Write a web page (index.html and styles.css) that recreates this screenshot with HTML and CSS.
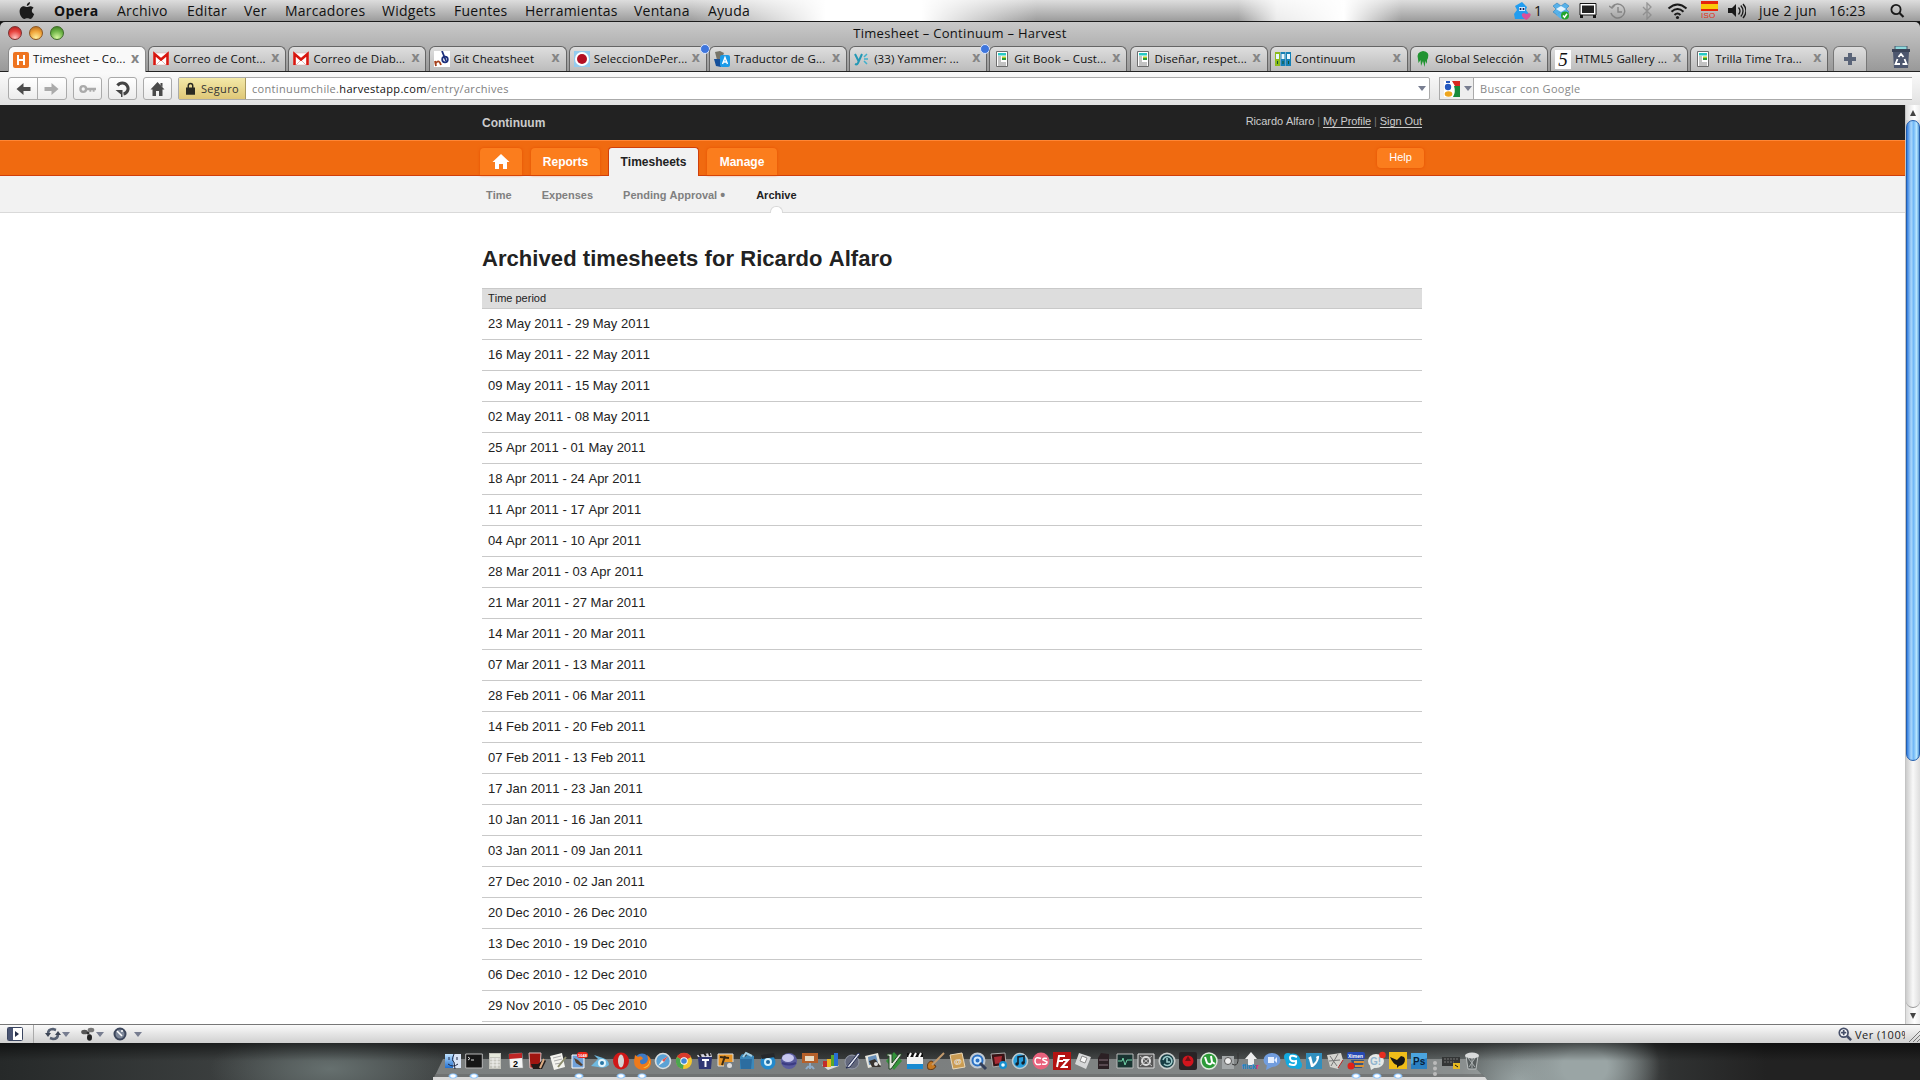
FILE: index.html
```html
<!DOCTYPE html>
<html lang="es">
<head>
<meta charset="utf-8">
<title>Timesheet – Continuum – Harvest</title>
<link rel="stylesheet" href="styles.css">
</head>
<body>
<svg class="defs" aria-hidden="true">
  <defs>
    <linearGradient id="gBlue" x1="0" y1="0" x2="0" y2="1"><stop offset="0" stop-color="#bfe2ff"/><stop offset="1" stop-color="#1f6fd0"/></linearGradient>
  </defs>
  <symbol id="gmail" viewBox="0 0 16 16"><path d="M0 2h16v12H0z" fill="#fff" stroke="#d8a0a0" stroke-width=".5"/><path d="M3 14l5-5 5 5" fill="none" stroke="#e3b5b2"/><path d="M1.500 14V3L8 8.500 14.500 3v11" fill="none" stroke="#d8160f" stroke-width="2.600"/></symbol>
  <symbol id="page" viewBox="0 0 16 16"><path d="M2.500.5h11v15h-11z" fill="#fff" stroke="#6d6d6d"/><path d="M4 2h8v2.500H4z" fill="#28c9c4"/><path d="M8 5.500h4V7H8z" fill="#b6c92c"/><path d="M8 7h4v2H8z" fill="#2a9c38"/><path d="M4 5.500h3v1H4zm0 2h3v1H4zm0 2h3v1H4zm0 2h8v1H4zm0 2h8v1H4z" fill="#888"/></symbol>
</svg>

<header class="menubar">
  <svg class="apple" viewBox="0 0 16 18"><path d="M11 0c.2 2-1.400 3.900-3.200 4C7.600 2 9.400.3 11 0zM8 5c.8 0 2-.9 3.600-.8 1.300.1 2.300.6 3 1.600-2.600 1.700-2.200 5.200.6 6.300-.7 2-2.200 4.900-3.900 4.900-1.200 0-1.600-.7-3-.7s-1.900.7-3 .7C3.200 17 .6 13 .6 9.500.6 6 2.800 4.200 4.900 4.200 6.300 4.200 7.200 5 8 5z" fill="#1c1c1c"/></svg>
  <nav class="menu"><b>Opera</b><span>Archivo</span><span>Editar</span><span>Ver</span><span>Marcadores</span><span>Widgets</span><span>Fuentes</span><span>Herramientas</span><span>Ventana</span><span>Ayuda</span></nav>
  <div class="tray">
    <svg viewBox="0 0 18 18"><path d="M9 0l5 5-1 3 3 4-3 5H2l-1-5 3-4-2-4z" fill="#229df0"/><path d="M6 5h6v4H6z" fill="#cfe9ff"/><circle cx="7.500" cy="7" r="1" fill="#114"/><circle cx="10.500" cy="7" r="1" fill="#114"/><path d="M13.500 18C6 14 8.500 9.500 13.500 12c5-2.500 6 2 0 6z" fill="#d9509b"/></svg>
    <span class="count">1</span>
    <svg viewBox="0 0 18 18"><path d="M5 1l4 3 4-3 4 3-3 3 3 3-4 3-4-3-4 3-4-3 3-3-3-3z" fill="#57b1e9" stroke="#2c83bd" stroke-width=".6"/><path d="M9 4l5 3-5 3-5-3z" fill="#e4f4ff"/><path d="M4 13l5 4 4-3-4-4z" fill="#57b1e9"/><circle cx="13" cy="13.500" r="4" fill="#23a52d"/><path d="M11 13.500l1.500 1.700 2.500-3.500" fill="none" stroke="#fff" stroke-width="1.500"/></svg>
    <svg viewBox="0 0 18 18"><path d="M1 1.500h16V13H1z" fill="#fff" stroke="#151515"/><path d="M3 3.500h12v7.500H3z" fill="#222"/><path d="M1 13h3v3H1zm13 0h3v3h-3z" fill="#151515"/></svg>
    <svg viewBox="0 0 18 18" class="dim"><path d="M3 5a7 7 0 1 1-1 6M0 4l3 2 3-3M9 5v5h4" fill="none" stroke="#777" stroke-width="1.400"/></svg>
    <svg viewBox="0 0 18 18" class="dim"><path d="M5 5l8 8-4 4V1l4 4-8 8" fill="none" stroke="#888" stroke-width="1.300"/></svg>
    <svg class="wifi" viewBox="0 0 20 18"><path d="M1 6.500q9-8 18 0M4 9.800q6-5.500 12 0M7 13q3-3 6 0" fill="none" stroke="#1a1a1a" stroke-width="2"/><circle cx="10" cy="15.500" r="1.600" fill="#1a1a1a"/></svg>
    <span class="flag"><i></i><small>ISO</small></span>
    <svg viewBox="0 0 18 18"><path d="M0 6h4l4-4v13l-4-4H0z" fill="#1a1a1a"/><path d="M10.500 5.500q3 3.500 0 7M12.800 3.500q4.500 5.500 0 11M15 2q6 7 0 14" fill="none" stroke="#1a1a1a" stroke-width="1.300"/></svg>
    <time class="date">jue 2 jun</time><time class="clock">16:23</time>
    <svg viewBox="0 0 16 18"><circle cx="7" cy="7.500" r="4.600" fill="none" stroke="#1a1a1a" stroke-width="1.800"/><path d="M10.500 11l4 4" stroke="#1a1a1a" stroke-width="2.200"/></svg>
  </div>
</header>

<main class="window">
  <div class="titlebar"><div class="lights"><i class="red"></i><i class="yellow"></i><i class="green"></i></div><span>Timesheet – Continuum – Harvest</span></div>

  <div class="tabstrip">
    <div class="tabs">
      <div class="tab active"><svg viewBox="0 0 16 16"><rect width="16" height="16" rx="2" fill="#ee7420"/><path d="M5 3v10M11 3v10M5 8h6" stroke="#fff" stroke-width="2"/></svg><span>Timesheet – Co...</span><b>x</b></div>
      <div class="tab"><svg><use href="#gmail"/></svg><span>Correo de Cont...</span><b>x</b></div>
      <div class="tab"><svg><use href="#gmail"/></svg><span>Correo de Diab...</span><b>x</b></div>
      <div class="tab"><svg viewBox="0 0 16 16"><path d="M0 0h16v16H0z" fill="#fff"/><path d="M2 15l-1-5M2 12q3-4 5 2" fill="none" stroke="#a5401c" stroke-width="1.800"/><path d="M8 0l4 10" stroke="#1c2f7c" stroke-width="1.800"/><circle cx="11" cy="8.500" r="2.800" fill="none" stroke="#1c2f7c" stroke-width="1.800"/></svg><span>Git Cheatsheet</span><b>x</b></div>
      <div class="tab unread"><svg viewBox="0 0 16 16"><path d="M0 0h16v16H0z" fill="#94cbee"/><circle cx="8" cy="8" r="7" fill="#fff"/><circle cx="8" cy="8" r="5" fill="#b30f24"/></svg><span>SeleccionDePer...</span><b>x</b></div>
      <div class="tab"><svg viewBox="0 0 16 16"><path d="M1 1l5-1 4 2-2 5-5 2z" fill="#77756a"/><path d="M0 8h7v8l-5-1z" fill="#154f9a"/><rect x="6" y="4" width="10" height="12" rx="2" fill="#1b9be8"/><path d="M8.500 13L11 6.500l2.500 6.500M9.500 11h3" fill="none" stroke="#fff" stroke-width="1.400"/></svg><span>Traductor de G...</span><b>x</b></div>
      <div class="tab unread"><svg viewBox="0 0 16 16"><path d="M1 3l3.500 7M8 3L4 12q-1 2-3 1" fill="none" stroke="#2498b5" stroke-width="2"/><path d="M10 6l3-3M10 8h4M10 10l3 3" stroke="#3fb0cc" stroke-width="1.500"/></svg><span>(33) Yammer: ...</span><b>x</b></div>
      <div class="tab"><svg><use href="#page"/></svg><span>Git Book – Cust...</span><b>x</b></div>
      <div class="tab"><svg><use href="#page"/></svg><span>Diseñar, respet...</span><b>x</b></div>
      <div class="tab"><svg viewBox="0 0 16 16"><path d="M0 1h5v14H0z" fill="#8dbb1c"/><path d="M5.500 1h5v14h-5zM11 1h5v14h-5z" fill="#1580b5"/><path d="M1 3h3v5H1zm5.500 0h3v5h-3zM12 3h3v5h-3z" fill="#e8f6ff"/><path d="M2 10h1v3H2zm5.500 0h1v3h-1zM13 10h1v3h-1z" fill="#153"/></svg><span>Continuum</span><b>x</b></div>
      <div class="tab"><svg viewBox="0 0 16 16"><path d="M3 8q-2-7 5-8 7 1 5 7l-1 2v4l-1.500-3-1 6-1.500-6-2 5-.5-6-2 3z" fill="#219331"/></svg><span>Global Selección</span><b>x</b></div>
      <div class="tab"><div class="five">5</div><span>HTML5 Gallery ...</span><b>x</b></div>
      <div class="tab"><svg><use href="#page"/></svg><span>Trilla Time Tra...</span><b>x</b></div>
    </div>
    <div class="newtab"><svg viewBox="0 0 14 14"><path d="M5 1h4v4h4v4H9v4H5V9H1V5h4z" fill="#5a6478"/></svg></div>
    <svg class="trash" viewBox="0 0 20 22"><path d="M4 0h12v4H4z" fill="#8fd9dc" stroke="#47566a"/><path d="M1 3h18v3H1z" fill="#3b4458"/><path d="M2 6h16l-1 16H3z" fill="#4c566e"/><path d="M7.500 11L10 8l2.500 3M13.500 13l2 5h-4M9 18H4.500l2-5" fill="none" stroke="#fff" stroke-width="1.800"/></svg>
  </div>

  <div class="toolbar">
    <div class="btn pair"><svg viewBox="0 0 16 16"><path d="M1 8l7-6v4h7v4H8v4z" fill="#4c4c4c"/></svg><svg viewBox="0 0 16 16"><path d="M15 8L8 2v4H1v4h7v4z" fill="#aaa"/></svg></div>
    <div class="btn"><svg viewBox="0 0 18 16"><circle cx="4.500" cy="8" r="3" fill="none" stroke="#aaa" stroke-width="2.500"/><path d="M7 6.800h11v2.500h-1.500V11h-2V9.300H13V11h-2V9.300H7z" fill="#aaa"/></svg></div>
    <div class="btn"><svg viewBox="0 0 16 16"><path d="M3 4.500A5.800 5.500 0 1 1 9 13" fill="none" stroke="#444" stroke-width="3"/><path d="M1 9h7v7H6.500v-2.500z" fill="#444"/></svg></div>
    <div class="btn"><svg viewBox="0 0 16 16"><path d="M8 1l7 7.500h-2V15H9.500v-5h-3v5H3V8.500H1zM11 2h2v4l-2-2z" fill="#4a4a4a"/></svg></div>
    <div class="address">
      <div class="secure"><svg viewBox="0 0 10 14"><path d="M2.500 7V4a2.500 2.500 0 0 1 5 0v3" fill="none" stroke="#2a2a22" stroke-width="1.600"/><path d="M0 6h10v8H0z" fill="#2a2a22"/></svg><span>Seguro</span></div>
      <span class="url">continuumchile.<em>harvestapp.com</em>/entry/archives</span><i class="caret"></i>
    </div>
    <div class="search">
      <div class="engine"><svg viewBox="0 0 16 16"><path d="M0 0h16v16H0z" fill="#fff"/><path d="M8 0h8v5h-5z" fill="#d7281f"/><path d="M10 5h6v11H9q3-5 1-11z" fill="#168b3c"/><circle cx="4" cy="6" r="3.200" fill="#2458be"/><path d="M2 0h4v2H2z" fill="#2458be"/><ellipse cx="4.500" cy="13" rx="3.800" ry="2.700" fill="#eda51d"/></svg><i class="caret"></i></div>
      <span>Buscar con Google</span>
    </div>
  </div>

  <div class="viewport">
    <div class="page">
      <div class="top"><div class="wrap"><strong>Continuum</strong><span class="user">Ricardo Alfaro <i>|</i> <u>My Profile</u> <i>|</i> <u>Sign Out</u></span></div></div>
      <div class="nav"><div class="wrap">
        <div class="navtabs"><a class="home"><svg viewBox="0 0 18 16"><path d="M9 0l8.500 8H15v7h-4v-5H7v5H3V8H.5z" fill="#fff"/></svg></a><a class="reports">Reports</a><a class="current">Timesheets</a><a class="manage">Manage</a></div>
        <a class="help">Help</a>
      </div></div>
      <div class="subnav"><div class="wrap"><a>Time</a><a>Expenses</a><a>Pending Approval <b>•</b></a><a class="on">Archive</a></div></div>
      <section class="content">
        <h1>Archived timesheets for Ricardo Alfaro</h1>
        <div class="thead">Time period</div>
        <ul class="rows">
          <li>23 May 2011 - 29 May 2011</li>
          <li>16 May 2011 - 22 May 2011</li>
          <li>09 May 2011 - 15 May 2011</li>
          <li>02 May 2011 - 08 May 2011</li>
          <li>25 Apr 2011 - 01 May 2011</li>
          <li>18 Apr 2011 - 24 Apr 2011</li>
          <li>11 Apr 2011 - 17 Apr 2011</li>
          <li>04 Apr 2011 - 10 Apr 2011</li>
          <li>28 Mar 2011 - 03 Apr 2011</li>
          <li>21 Mar 2011 - 27 Mar 2011</li>
          <li>14 Mar 2011 - 20 Mar 2011</li>
          <li>07 Mar 2011 - 13 Mar 2011</li>
          <li>28 Feb 2011 - 06 Mar 2011</li>
          <li>14 Feb 2011 - 20 Feb 2011</li>
          <li>07 Feb 2011 - 13 Feb 2011</li>
          <li>17 Jan 2011 - 23 Jan 2011</li>
          <li>10 Jan 2011 - 16 Jan 2011</li>
          <li>03 Jan 2011 - 09 Jan 2011</li>
          <li>27 Dec 2010 - 02 Jan 2011</li>
          <li>20 Dec 2010 - 26 Dec 2010</li>
          <li>13 Dec 2010 - 19 Dec 2010</li>
          <li>06 Dec 2010 - 12 Dec 2010</li>
          <li>29 Nov 2010 - 05 Dec 2010</li>
        </ul>
      </section>
    </div>
    <div class="scrollbar"><i class="up"></i><div class="track"><div class="thumb"></div></div><i class="down"></i></div>
  </div>

  <footer class="status">
    <div class="panel"><svg viewBox="0 0 16 14"><rect x=".5" y=".5" width="15" height="13" rx="1" fill="#fff" stroke="#3a4560"/><path d="M1 1h5v12H1z" fill="#4a5573"/><path d="M8 4l4 3-4 3z" fill="#27304a"/></svg></div>
    <svg class="s1" viewBox="0 0 16 14"><path d="M3 7q0-5 5-5l3 1M13 7q0 5-5 5l-3-1" fill="none" stroke="#566072" stroke-width="2.600"/><path d="M0 6h6L3 10zM10 8h6l-3-4z" fill="#3d4656"/></svg><i class="caret"></i>
    <svg class="s2" viewBox="0 0 14 14"><ellipse cx="3.500" cy="5" rx="3.300" ry="2.300" fill="#555"/><ellipse cx="10" cy="3" rx="3.300" ry="2.300" fill="#777"/><ellipse cx="8.500" cy="10.500" rx="2.500" ry="3.300" fill="#222"/><circle cx="7" cy="6" r="1.500" fill="#333"/></svg><i class="caret"></i>
    <svg class="s3" viewBox="0 0 14 14"><circle cx="7" cy="7" r="5.500" fill="#7d8799" stroke="#3d475c" stroke-width="2"/><path d="M4 4l5 5" stroke="#fff" stroke-width="1.600"/><circle cx="9" cy="4" r="1" fill="#fff"/></svg><i class="caret last"></i>
    <div class="zoomlevel"><svg viewBox="0 0 16 16"><circle cx="6.500" cy="6.500" r="5" fill="#fff" stroke="#47506a" stroke-width="2"/><path d="M10 10l5 5" stroke="#47506a" stroke-width="3"/><path d="M3.500 6.500h6M6.500 3.500v6" stroke="#47506a" stroke-width="2"/></svg><span>Ver (100%)</span></div>
    <svg class="grip" viewBox="0 0 12 12"><path d="M1 12L12 1M5 12l7-7M9 12l3-3" stroke="#777"/></svg>
  </footer>
</main>

<div class="desktop">
  <div class="dock">
    <svg class="shelf" viewBox="0 0 1054 21" preserveAspectRatio="none"><path d="M10 0h1024l20 21H0z" fill="#a9acac" fill-opacity=".58"/><path d="M2 15h1047l3 3H1z" fill="#686969" fill-opacity=".6"/><path d="M0 18h1052l2 3H0z" fill="#d9d9d9"/></svg>
    <div class="icons">
      <svg class="run" viewBox="0 0 18 18"><path d="M1 2h16v14H1z" fill="url(#gBlue)"/><path d="M10 2h7v14H9z" fill="#d9e4f5"/><path d="M10 2q-3 7 0 8l1 7M4 12q5 4 10 0M5 5v3M13 5v3" fill="none" stroke="#1c2744"/></svg>
      <svg class="run" viewBox="0 0 18 18"><path d="M.7 2h16.600v14H.7z" fill="#161616" stroke="#b8b8b8"/><path d="M3 5l2 1.500L3 8M6 8h3" fill="none" stroke="#ddd"/></svg>
      <svg viewBox="0 0 18 18"><path d="M3 1h12v16H3z" fill="#c5c5bd"/><path d="M4 2h10v3H4z" fill="#e6e9dc"/><path d="M4 7h10M4 10h10M4 13h10M7 6v10M11 6v10" stroke="#f1f1ee"/></svg>
      <svg viewBox="0 0 18 18"><path d="M2 2l13-1 1 15H3z" fill="#f5f5f5" stroke="#999" stroke-width=".5"/><path d="M2 2l13-1v5L2 7z" fill="#be2525"/><text x="6" y="15" class="cal">2</text></svg>
      <svg viewBox="0 0 18 18"><path d="M1 1h12l-1 15H2z" fill="#a01510" stroke="#dbb"/><path d="M3 12h7l6-5 2 2-4 8H5z" fill="#201a18"/><path d="M12 16l4-9" stroke="#dcab83" stroke-width="2"/></svg>
      <svg viewBox="0 0 18 18"><path d="M1 4l12-3 3 14-11 3z" fill="#f3f3ee"/><path d="M4 6l8-2M5 9l8-2M6 12l6-1" stroke="#aaa"/><path d="M9 15l8-10" stroke="#8b8b6b" stroke-width="2"/></svg>
      <svg class="run" viewBox="0 0 18 18"><path d="M2 3h12v13H2z" fill="#6fa0d8" stroke="#fff"/><path d="M4 6l4 2 5 5-2 1-5-3z" fill="#57412f"/><rect x="7" y="0" width="11" height="6" rx="3" fill="#eb2519"/><text x="8" y="4.800" class="badge">1048</text></svg>
      <svg viewBox="0 0 18 18"><path d="M0 14l7-7-4-4 9 3q6 2 6 7-4 4-11 2z" fill="#6fb9df"/><circle cx="11" cy="11" r="4" fill="#e4f4fa"/><circle cx="11" cy="11" r="2" fill="#2875a4"/></svg>
      <svg class="run" viewBox="0 0 18 18"><ellipse cx="9" cy="9" rx="8" ry="8.500" fill="#cf1717"/><ellipse cx="9" cy="9" rx="3" ry="6.500" fill="#d4d4d4"/></svg>
      <svg class="run" viewBox="0 0 18 18"><circle cx="9" cy="9" r="7.500" fill="#3f7ac4"/><path d="M2 3l3 2q4-2 5 2-5 1-2 5 6 1 7-5l-1-4q5 3 4 9-2 6-9 6-8-1-8-9z" fill="#ef7a1a"/><path d="M15 5q4 8-5 11 6 0 7-6z" fill="#f6c83d"/></svg>
      <svg viewBox="0 0 18 18"><circle cx="9" cy="9" r="7.500" fill="#5ba2d5" stroke="#d7dde0" stroke-width="1.600"/><path d="M14 4l-4 6-6 4 4-6z" fill="#f1eeee"/><path d="M14 4l-4 6-2-2z" fill="#d55"/></svg>
      <svg viewBox="0 0 18 18"><circle cx="9" cy="9" r="8" fill="#f2c62d"/><path d="M9 9L2 5a8 8 0 0 1 14 0z" fill="#d93a2c"/><path d="M9 9l-1 8A8 8 0 0 1 2 5z" fill="#4ba64f"/><circle cx="9" cy="9" r="3.700" fill="#fff"/><circle cx="9" cy="9" r="2.800" fill="#4386d5"/></svg>
      <svg viewBox="0 0 18 18"><path d="M2 5h14l-1 12H3z" fill="#303773"/><path d="M1 3l14-2 1 4H2z" fill="#d7d7e1"/><path d="M3 2l2 3M8 1l2 3M13 1l1 3" stroke="#222" stroke-width="2"/><path d="M6 8h7M9.500 8v7" stroke="#fff" stroke-width="2"/></svg>
      <svg viewBox="0 0 18 18"><path d="M1 2h15v12H1z" fill="#e69425" stroke="#ddd"/><path d="M5 13l3-9M3 5l9 1" stroke="#3c2a13" stroke-width="2"/><rect x="7" y="10" width="11" height="7" rx="1" fill="#777e83"/><circle cx="12.500" cy="13.500" r="2.500" fill="#ddd"/></svg>
      <svg viewBox="0 0 18 18"><path d="M2 5q3-6 5 0 4-5 6-2l3 1v13H2z" fill="#3c88ba"/><path d="M2 7h12l-1 10H3z" fill="#2c6da0"/><path d="M5 5l3-4 6 3" stroke="#a2cfe5" stroke-width="2" fill="none"/></svg>
      <svg viewBox="0 0 18 18"><circle cx="9" cy="10" r="7.500" fill="#2489cc"/><path d="M2 3l13-2 1 4-13 2z" fill="#26282b"/><circle cx="9" cy="10" r="4" fill="#d3f1fc"/><circle cx="9" cy="10" r="2" fill="#206aa2"/></svg>
      <svg viewBox="0 0 18 18"><circle cx="9" cy="9" r="8" fill="#5a5c9e"/><ellipse cx="8" cy="6" rx="6" ry="4" fill="#c7c7ee"/><path d="M2 11q7 3 14 0" stroke="#3c3c83" stroke-width="2" fill="none"/></svg>
      <svg viewBox="0 0 18 18"><path d="M1 1h16v10H1z" fill="#b5602a"/><path d="M4 4h9v5H4z" fill="#e6dbc6"/><path d="M9 11v6M5 17q4-6 8 0" stroke="#8dabc9" stroke-width="2" fill="none"/></svg>
      <svg viewBox="0 0 18 18"><path d="M0 13l11-4 6 5-11 4z" fill="#ddd"/><path d="M1 9h4v6H1z" fill="#c22c29"/><path d="M5 7h4v8H5z" fill="#edb723"/><path d="M9 3h3v11H9z" fill="#58a82c"/><path d="M12 1h4v13h-4z" fill="#296fd1"/></svg>
      <svg viewBox="0 0 18 18"><circle cx="9" cy="10" r="7" fill="#63687b" stroke="#9499a8"/><path d="M3 16L15 1l2 1-10 13z" fill="#dfe2ed" stroke="#222b52"/></svg>
      <svg viewBox="0 0 18 18"><path d="M1 4l13-3 3 12-13 3z" fill="#e5e4dc"/><path d="M4 5l8-2 2 8-9 2z" fill="#6991bb"/><path d="M5 9l6-2 6 8H8z" fill="#37332f"/><circle cx="12" cy="12" r="2" fill="#ddd"/></svg>
      <svg viewBox="0 0 18 18"><path d="M9 0l8 9-8 9-8-9z" fill="#329339"/><path d="M2 2h5v9l7-9h3L6 17H4V4H2z" fill="#e1e5dd" stroke="#244427"/></svg>
      <svg viewBox="0 0 18 18"><path d="M1 5h16v7H1z" fill="#f2f2f2"/><path d="M1 1h16v4H1z" fill="#111"/><path d="M3 5l2-4M8 5l2-4M13 5l2-4" stroke="#fff" stroke-width="2"/><path d="M1 12h16v5H1z" fill="#188ad1"/></svg>
      <svg viewBox="0 0 18 18"><path d="M1 17q-2-6 3-8 3 0 3 4l2 1q-2 5-8 3z" fill="#c87920" stroke="#633915"/><path d="M5 13L17 1" stroke="#c29a6d" stroke-width="2"/></svg>
      <svg viewBox="0 0 18 18"><path d="M2 3l12-2 3 14-12 2z" fill="#ca9c54" stroke="#ecdab9"/><text x="6" y="12" class="at">@</text></svg>
      <svg viewBox="0 0 18 18"><circle cx="8.500" cy="8.500" r="7" fill="#2a70c3" stroke="#c0cad4" stroke-width="2"/><circle cx="8.500" cy="8.500" r="3" fill="none" stroke="#cee9ff" stroke-width="2"/><path d="M11 11l6 6" stroke="#333f59" stroke-width="3"/></svg>
      <svg viewBox="0 0 18 18"><path d="M1 2l14-1 1 12-13 2z" fill="#381315" stroke="#aaa"/><path d="M4 5l8-1-1 7-6 1z" fill="#aa2c35"/><circle cx="13" cy="13" r="4" fill="#158fd0"/><circle cx="13" cy="13" r="1.800" fill="#e8faff"/></svg>
      <svg viewBox="0 0 18 18"><circle cx="9" cy="9" r="7.500" fill="#279edc" stroke="#bdcbd0" stroke-width="1.500"/><path d="M7 12V5l6-1v7" fill="none" stroke="#15202a" stroke-width="1.600"/><circle cx="6" cy="12" r="1.700" fill="#15202a"/><circle cx="12" cy="11" r="1.700" fill="#15202a"/></svg>
      <svg viewBox="0 0 18 18"><circle cx="9" cy="9" r="8.500" fill="#e9627d"/><path d="M9 6.500Q3 4 3 9t6 3M15 6.500q-5-1-4 1.500l4 2q0 3-5 2" fill="none" stroke="#fff" stroke-width="1.500"/></svg>
      <svg viewBox="0 0 18 18"><path d="M0 0h18v18H0z" fill="#b31312"/><path d="M4 15L6 4h6M5 9h5M10 8h5l-6 7h6" fill="none" stroke="#fff" stroke-width="2"/></svg>
      <svg viewBox="0 0 18 18"><path d="M5 1l12 4-5 12L1 12z" fill="#d6d7d8"/><path d="M8 4l5 2-2 5-5-2z" fill="#f8f8f8" stroke="#888"/></svg>
      <svg viewBox="0 0 18 18"><path d="M6 1l8 1v15H3V6z" fill="#2b2024"/><path d="M4 8h9M4 13h9" stroke="#85707a"/></svg>
      <svg viewBox="0 0 18 18"><path d="M1 2h16v14H1z" fill="#193431" stroke="#bbb"/><path d="M2 9h4l1-3 2 7 2-5h5" fill="none" stroke="#70d1a6"/></svg>
      <svg viewBox="0 0 18 18"><path d="M1 2h16v14H1z" fill="#555" stroke="#ddd"/><circle cx="9" cy="9" r="4" fill="none" stroke="#ddd" stroke-width="2"/><path d="M3 4l12 10M15 4L3 14" stroke="#bbb"/></svg>
      <svg viewBox="0 0 18 18"><circle cx="9" cy="9" r="7.700" fill="#173e45" stroke="#c8cdcc" stroke-width="1.700"/><path d="M5 8a4.500 4.500 0 1 1 1 4M9 6v4h3" fill="none" stroke="#9dcac9" stroke-width="1.600"/></svg>
      <svg viewBox="0 0 18 18"><rect width="18" height="18" rx="2" fill="#292325"/><circle cx="9" cy="9" r="5.500" fill="#d1151d"/><path d="M9 4l3 5H6z" fill="#741015"/></svg>
      <svg viewBox="0 0 18 18"><circle cx="9" cy="9" r="8" fill="#2c9a37" stroke="#deebdc" stroke-width="1.500"/><path d="M5 5l2 6q4 3 5-1l-1-6M12 10l3 2" fill="none" stroke="#fff" stroke-width="2"/></svg>
      <svg viewBox="0 0 18 18"><path d="M1 4h12v13H1z" fill="#a4a8a9"/><circle cx="7" cy="9" r="3.500" fill="#eee" stroke="#555"/><path d="M11 12q5 3 6-3V1" stroke="#333" fill="none"/></svg>
      <svg viewBox="0 0 18 18"><path d="M9 0l6 7h-3v6H6V7H3z" fill="#ededed"/><text x="0" y="17" class="flickr">flick<tspan fill="#e61680">r</tspan></text></svg>
      <svg viewBox="0 0 18 18"><ellipse cx="9" cy="8" rx="8.500" ry="7" fill="#719dde"/><path d="M4 13l-1 5 6-3z" fill="#719dde"/><path d="M5 5h6v6H5zM11 8l3-3v6z" fill="#e5efff"/></svg>
      <svg viewBox="0 0 18 18"><circle cx="9" cy="9" r="7.500" fill="#13a9df"/><circle cx="4" cy="5" r="4" fill="#13a9df"/><circle cx="14" cy="13" r="4" fill="#13a9df"/><path d="M13 5Q6 2 6 6t6 3q1 6-7 3" fill="none" stroke="#fff" stroke-width="2"/></svg>
      <svg viewBox="0 0 18 18"><path d="M1 1h16v16H1z" fill="#318fbe"/><path d="M3 6l3-2 2 8q5-4 3-7 4-3 3 1-1 5-6 9H6L4 7z" fill="#fff"/></svg>
      <svg viewBox="0 0 18 18"><path d="M1 3l14-2 2 7-5 9-8-2z" fill="#d4d4cf"/><path d="M4 4l7 10M12 2L5 14M3 9l11-1" stroke="#777"/><path d="M12 16l5-8" stroke="#b02222"/></svg>
      <svg class="run" viewBox="0 0 18 18"><path d="M4 8h13l-2 8H6z" fill="#365681"/><path d="M7 10h10M8 14h9" stroke="#dc9134" stroke-width="2"/><rect width="18" height="7" rx="2" fill="#264ab4"/><text x="1" y="5.500" class="xim">Ximen</text><circle cx="4" cy="14" r="3.500" fill="#e02018"/></svg>
      <svg class="run" viewBox="0 0 18 18"><ellipse cx="8" cy="9" rx="8" ry="7" fill="#e5e9e7"/><path d="M2 14l1 4 5-3z" fill="#e5e9e7"/><text x="2" y="13" class="growl">G!</text><circle cx="14.500" cy="3" r="3.300" fill="#e62d21"/></svg>
      <svg class="run" viewBox="0 0 18 18"><path d="M0 0h18v17H0z" fill="#f0bd19"/><path d="M1 5l7 3 4-4 3 1 1 2q0 6-6 7l-2 2v-3Q4 12 1 5z" fill="#181818"/></svg>
      <svg viewBox="0 0 18 18"><path d="M1 1h16v16H1z" fill="#2b80c2"/><path d="M1 1h16v5L1 12z" fill="#4ba5e0"/><text x="3" y="13" class="ps">Ps</text></svg>
      <i class="sep"></i>
      <svg viewBox="0 0 18 18"><path d="M0 5h18v9H0z" fill="#343636"/><path d="M2 7h14M2 10h10" stroke="#777" stroke-dasharray="2 1"/><path d="M11 11h7v6h-7z" fill="#e6b922"/><path d="M13 13l3 2" stroke="#111"/></svg>
      <svg viewBox="0 0 18 18"><path d="M3 4h12l-2 13H5z" fill="#555b5c" stroke="#b9bebe"/><path d="M5 6l7 9M12 6l-6 9M9 5v11" stroke="#a9afaf"/><ellipse cx="9" cy="3.500" rx="7" ry="3" fill="#d8dada"/></svg>
    </div>
  </div>
</div>
</body>
</html>
```
FILE: styles.css
```css
* { box-sizing: border-box; }
html, body { margin: 0; height: 100%; overflow: hidden; }
body { display: flex; flex-direction: column; background: #111; color: #222; font-family: "Open Sans", "Noto Sans", sans-serif; }
svg { display: block; flex: none; }
.defs { position: absolute; width: 0; height: 0; }

.menubar { height: 22px; flex: none; display: flex; align-items: center; padding-left: 19px; border-bottom: 1px solid #1b1b1b; color: #111; font-size: 14px; line-height: 21px;
  background: linear-gradient(90deg, transparent 36%, #fff 43%, #fff 48%, transparent 54%, transparent 64.500%, #ffffffcc 66.500%, #fff 70%, transparent 73%), linear-gradient(#ddd, #9c9c9c); }
.apple { width: 16px; height: 18px; }
.menu { display: grid; grid-template-columns: 63px 70px 57px 41px 97px 72px 71px 109px 74px 50px; margin-left: 19px; letter-spacing: .25px; white-space: nowrap; }
.tray { display: grid; grid-template-columns: 18px 21px 27px 30px 29px 29px 34px 27px 31px 70px 59px 20px; align-items: center; margin-left: auto; width: 407px; white-space: nowrap; letter-spacing: .2px; }
.tray svg { width: 18px; height: 18px; }
.tray .wifi { width: 21px; height: 18px; }
.count { padding-left: 3px; }
.dim { opacity: .8; }
.flag { width: 17px; height: 19px; display: flex; flex-direction: column; }
.flag i { height: 10px; background: linear-gradient(#e5250d 3px, #f9c90b 3px 8px, #e5250d 8px); }
.flag small { font: 8px/9px "Liberation Sans", sans-serif; color: #e32b12; }

.window { height: 1021px; flex: none; display: flex; flex-direction: column; border-radius: 5px 5px 0 0; overflow: hidden; background: linear-gradient(#c9c9c9, #989898 50px); }
.titlebar { height: 24px; flex: none; position: relative; text-align: center; font-size: 13px; line-height: 23px; letter-spacing: .3px; color: #111; }
.lights { position: absolute; left: 8px; top: 4px; display: flex; gap: 7px; }
.lights i { width: 14px; height: 14px; border-radius: 50%; border: 1px solid #7a3030; background: radial-gradient(circle at 50% 90%, #ffc5c0, #e8433e 55%, #a31b1b); }
.lights .yellow { border-color: #8a5520; background: radial-gradient(circle at 50% 90%, #ffef9c, #f0a338 55%, #a7601a); }
.lights .green { border-color: #3d6a28; background: radial-gradient(circle at 50% 90%, #d8f8a0, #6fb548 55%, #37751d); }

.tabstrip { height: 26px; flex: none; display: flex; padding-left: 8px; border-bottom: 1px solid #222; }
.tabs { display: grid; grid-template-columns: repeat(13, 138px); column-gap: 2.200px; width: 1825px; }
.tab { position: relative; display: flex; align-items: center; height: 25px; padding-left: 4px; border: 1px solid #656565; border-bottom: 0; border-radius: 6px 6px 0 0; background: linear-gradient(#dedede, #bcbcbc); font-size: 11.500px; line-height: 14px; color: #111; }
.tab.active { height: 26px; background: #f9f9f9; border-color: #888; }
.tab svg { width: 16px; height: 16px; }
.tab span { width: 97px; margin-left: 4px; padding-bottom: 1px; white-space: nowrap; letter-spacing: .1px; }
.tab b { font: bold 14px/16px "Open Sans", sans-serif; color: #858585; margin: -4px 0 0 1px; }
.unread::after { content: ""; position: absolute; right: -4px; top: -3px; width: 8px; height: 8px; border-radius: 50%; background: #3f76dd; border: 1px solid #dfe8fb; }
.tab .five { width: 16px; height: 19px; background: #fff; font: italic 19px/19px "Liberation Serif", serif; text-align: center; }
.newtab { width: 34px; height: 25px; display: grid; place-items: center; border: 1px solid #777; border-bottom: 0; border-radius: 6px 6px 0 0; background: linear-gradient(#dedede, #bcbcbc); }
.newtab svg { width: 14px; height: 14px; }
.trash { width: 20px; height: 22px; margin-left: 24px; }

.toolbar { height: 33px; flex: none; display: flex; padding: 5px 8px 0; background: linear-gradient(#fafafa, #e2e2e2); }
.btn { width: 29px; height: 23px; margin-right: 6px; border: 1px solid #aaa; border-radius: 3px; background: linear-gradient(#fff, #ececec); display: flex; align-items: center; justify-content: space-around; }
.btn.pair { width: 59px; background: linear-gradient(90deg, transparent 28px, #aaa 28px 29px, transparent 29px), linear-gradient(#fff, #ececec); }
.btn svg { width: 17px; height: 16px; }
.address { width: 1252px; height: 23px; display: flex; align-items: center; border: 1px solid #aaa; border-radius: 2px; background: #fff; font-size: 11px; }
.secure { width: 67px; height: 21px; display: flex; align-items: center; padding-left: 7px; background: linear-gradient(#f3e9a8, #dfc777); border-right: 1px solid #a99a60; color: #333; letter-spacing: .3px; }
.secure svg { width: 9px; height: 13px; margin-right: 6px; }
.url { margin-left: 6px; color: #808080; letter-spacing: .33px; }
.url em { font-style: normal; color: #111; }
.caret { width: 0; height: 0; border: 4px solid transparent; border-top: 5px solid #777d90; border-bottom: 0; }
.address .caret { margin-left: auto; margin-right: 3px; }
.search { flex: none; width: 473px; height: 23px; margin-left: 9px; display: flex; align-items: center; border: 1px solid #aaa; border-right: 0; background: #fff; font-size: 11px; letter-spacing: .3px; color: #888; }
.engine { width: 34px; height: 21px; margin-right: 6px; display: flex; align-items: center; gap: 4px; padding-left: 4px; border-right: 1px solid #aaa; background: #eee; }
.engine svg { width: 16px; height: 16px; }

.viewport { height: 919px; flex: none; display: flex; background: #fff; }
.page { flex: 1; font-family: "Liberation Sans", Arial, sans-serif; font-kerning: none; }
.wrap { width: 940px; margin-left: 482px; display: flex; justify-content: space-between; }
.top { height: 35px; background: #222; color: #ccc; }
.top strong { font-size: 12px; line-height: 36px; }
.user { font-size: 11px; line-height: 33px; letter-spacing: -.08px; }
.user i { color: #777; font-style: normal; }
.user u { text-underline-offset: 2px; }
.nav { height: 36px; background: #f06a10; border-top: 1px solid #ff8635; border-bottom: 1px solid #d03f0b; }
.navtabs { display: flex; align-items: flex-end; height: 34px; margin-left: -2px; font-size: 12px; font-weight: bold; color: #fff; }
.navtabs a { height: 27px; line-height: 28px; text-align: center; border-radius: 4px 4px 0 0; background: #fb7d1d; box-shadow: 0 0 3px #e65100; margin-right: 9px; }
.navtabs .home { width: 42px; padding: 6px 12px; }
.home svg { width: 18px; height: 16px; }
.reports { width: 69px; }
.navtabs .current { width: 91px; height: 29px; margin: 0 8px -1px -1px; border: 1px solid #d03f0b; border-bottom: 0; background: #f2f2f2; color: #222; box-shadow: none; }
.manage { width: 70px; }
.help { width: 47px; height: 20px; margin: 7px -2px 0 0; border-radius: 4px; background: #fb7d1d; box-shadow: 0 0 3px #e65100; color: #fff; font-size: 11px; line-height: 19px; text-align: center; }
.subnav { height: 37px; background: #f2f2f2; border-bottom: 1px solid #d9d9d9; font-size: 11px; font-weight: bold; line-height: 38px; color: #808080; }
.subnav .wrap { justify-content: flex-start; gap: 30px; padding-left: 4px; }
.subnav b { font-size: 14px; line-height: 1; vertical-align: -1px; }
.subnav .on { position: relative; height: 37px; margin-left: 1px; color: #222; }
.on::after { content: ""; position: absolute; left: 14px; bottom: 0; width: 11px; height: 6px; border: 1px solid #d9d9d9; border-bottom: 0; border-radius: 6px 6px 0 0; background: #fff; }
.content { width: 940px; margin-left: 482px; padding-top: 32px; }
h1 { margin: 0; height: 43px; font-size: 22px; line-height: 28px; color: #222; white-space: nowrap; letter-spacing: .06px; }
.thead { height: 21px; padding-left: 6px; border: solid #c9c9c9; border-width: 1px 0; background: #ddd; font-size: 11px; line-height: 19px; }
.rows { list-style: none; margin: 0; padding: 0; font-size: 13px; }
.rows li { height: 31px; padding-left: 6px; line-height: 30px; border-bottom: 1px solid #c9c9c9; }

.scrollbar { width: 15px; display: flex; flex-direction: column; align-items: center; border-left: 1px solid #c4c4c4; background: linear-gradient(90deg, #ddd, #fff 60%, #eee); }
.up, .down { width: 0; height: 0; border: 3.500px solid transparent; margin: 5px 0 4px; }
.up { border-bottom: 6px solid #444; border-top: 0; }
.down { border-top: 6px solid #444; border-bottom: 0; margin: 5px 0; }
.track { flex: 1; width: 14px; border-radius: 0 0 7px 7px; border-bottom: 1px solid #999; background: linear-gradient(90deg, #ccc, #f8f8f8 50%, #ddd); }
.thumb { height: 641px; border-radius: 7px; border: 1px solid #245fae; background: linear-gradient(90deg, #2f7be0, #a9d7fb 35%, #70b7f6 55%, #b8e6ff 80%, #579cd9); }

.status { height: 19px; flex: none; display: flex; align-items: center; border-top: 1px solid #777; background: linear-gradient(#fafafa, #d0d0d0); font-size: 11px; }
.panel { width: 34px; height: 18px; padding: 2px 0 0 7px; border-right: 1px solid #aaa; }
.panel svg { width: 16px; height: 14px; }
.s1 { width: 16px; height: 14px; margin-left: 11px; }
.s2 { width: 14px; height: 14px; margin-left: 11px; }
.s3 { width: 14px; height: 14px; margin-left: 9px; }
.status .caret { margin-left: 1px; }
.status .last { margin-left: 7px; }
.zoomlevel { width: 67px; margin-left: auto; display: flex; align-items: center; gap: 3px; overflow: hidden; white-space: nowrap; letter-spacing: .5px; }
.zoomlevel svg { width: 14px; height: 14px; }
.grip { width: 12px; height: 12px; margin: 4px 0 0 3px; }

.desktop { height: 37px; flex: none; padding: 9px 0 0 433px; background:
  linear-gradient(#0008, transparent 18px),
  radial-gradient(ellipse 120px 45px at 330px 26px, #66706f, transparent),
  radial-gradient(ellipse 75px 60px at 1585px 24px, #9aa5a5 30%, transparent),
  radial-gradient(ellipse 60px 50px at 1520px 40px, #9aa5a5, transparent),
  linear-gradient(90deg, #262929, #414545 15%, #3b3e3e 45%, #555a5a 72%, #727979 82%, #303232 87%, #222 92%); }
.dock { position: relative; width: 1054px; height: 28px; }
.shelf { position: absolute; left: 0; top: 7px; width: 1054px; height: 21px; }
.icons { position: relative; display: grid; grid-template-columns: repeat(47, 21px) 11px 21px 21px; padding-left: 10px; height: 28px; }
.icons svg { width: 18px; height: 18px; margin-left: 1px; overflow: visible; }
.icons .run { height: 28px; padding-bottom: 10px; background: radial-gradient(ellipse 5px 3px at 9px 24px, #fff 40%, #91c8ff 70%, transparent); }
.sep { width: 4px; height: 15px; margin: 9px 0 0 3px; border-left: 4px dotted #bbb; }
.cal { font: bold 9px "Liberation Sans", sans-serif; }
.badge { font: bold 4px "Liberation Sans", sans-serif; fill: #fff; }
.at { font: bold 8px "Liberation Sans", sans-serif; fill: #eee; }
.flickr { font: bold 7px "Liberation Sans", sans-serif; fill: #1685d1; }
.xim { font: bold 5px "Liberation Sans", sans-serif; fill: #fff; }
.growl { font: bold 10px "Liberation Sans", sans-serif; fill: #91b4cd; }
.ps { font: bold 10px "Liberation Sans", sans-serif; fill: #071f3b; }
```
